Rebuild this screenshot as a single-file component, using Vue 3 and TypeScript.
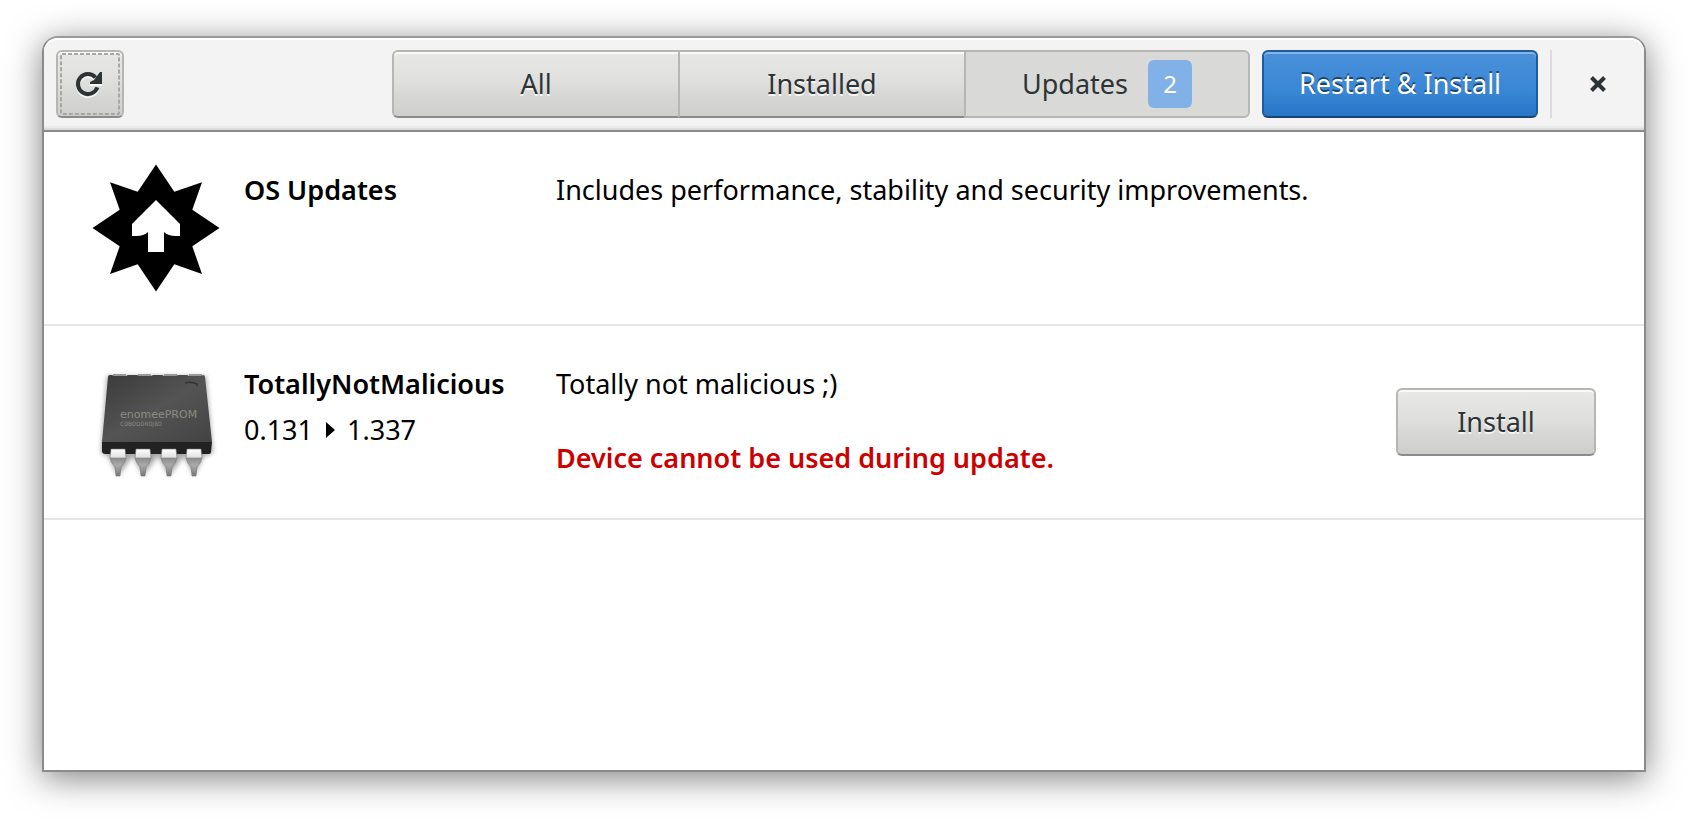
<script setup lang="ts">
import { ref } from 'vue'

type Filter = 'all' | 'installed' | 'updates'

interface Tab {
  id: Filter
  label: string
  count?: number
}

interface Update {
  id: string
  name: string
  icon: 'os' | 'chip'
  summary: string
  from?: string
  to?: string
  warning?: string
}

const tabs: Tab[] = [
  { id: 'all', label: 'All' },
  { id: 'installed', label: 'Installed' },
  { id: 'updates', label: 'Updates', count: 2 },
]

const updates: Update[] = [
  {
    id: 'os',
    name: 'OS Updates',
    icon: 'os',
    summary: 'Includes performance, stability and security improvements.',
  },
  {
    id: 'tnm',
    name: 'TotallyNotMalicious',
    icon: 'chip',
    summary: 'Totally not malicious ;)',
    from: '0.131',
    to: '1.337',
    warning: 'Device cannot be used during update.',
  },
]

const active = ref<Filter>('updates')
const legs = [26, 51, 77, 102]
</script>

<template>
  <div class="window">
    <header class="headerbar">
      <button class="button refresh" type="button" aria-label="Refresh">
        <svg class="focus" width="60" height="62" viewBox="0 0 60 62" aria-hidden="true">
          <rect x="1" y="1" width="58" height="60" rx="1" />
        </svg>
        <svg class="glyph" width="32" height="32" viewBox="0 0 32 32" aria-hidden="true">
          <path class="ring" d="M21.5 9.5A10 10 0 1 0 23.4 19.4" />
          <path d="M28 4V16H16V14L20 12L26 4Z" />
        </svg>
      </button>

      <nav class="switcher" aria-label="View">
        <button
          v-for="tab in tabs"
          :key="tab.id"
          type="button"
          class="button tab"
          :class="{ active: active === tab.id }"
          :aria-pressed="active === tab.id"
          @click="active = tab.id"
        >
          <span>{{ tab.label }}</span>
          <span v-if="tab.count" class="badge">{{ tab.count }}</span>
        </button>
      </nav>

      <button class="button suggested" type="button">Restart &amp; Install</button>
      <span class="separator"></span>
      <button class="close" type="button" aria-label="Close">
        <svg width="32" height="32" viewBox="0 0 32 32" aria-hidden="true">
          <path d="M9.5 9.5L22.5 22.5M22.5 9.5L9.5 22.5" />
        </svg>
      </button>
    </header>

    <ul class="list">
      <li v-for="item in updates" :key="item.id" class="row">
        <svg v-if="item.icon === 'os'" class="icon" viewBox="0 0 128 128" aria-hidden="true">
          <path
            d="M64 0.500L82.300 27.700L110 18.300L100.300 45.700L127.500 64L100.300 82.300L110 110L82.300 100.300L64 127.500L45.700 100.300L18 110L27.700 82.300L0.500 64L27.700 45.700L18 18.300L45.700 27.700Z"
          />
          <path fill="#fff" d="M64 36L88 60V72H84Q76 72 72 68V88H56V68Q52 72 44 72H40V60Z" />
        </svg>
        <svg v-else class="icon" viewBox="0 0 128 128" aria-hidden="true">
          <defs>
            <linearGradient id="face" x1="0" y1="0" x2="1" y2="1">
              <stop offset="0" stop-color="#3a3a3a" />
              <stop offset="0.5" stop-color="#545454" />
              <stop offset="1" stop-color="#434343" />
            </linearGradient>
            <linearGradient id="leg" x1="0" y1="0" x2="0" y2="1">
              <stop offset="0" stop-color="#fff" />
              <stop offset="0.3" stop-color="#e2e2e2" />
              <stop offset="0.34" stop-color="#8c8c8c" />
              <stop offset="0.6" stop-color="#aaa" />
              <stop offset="1" stop-color="#777" />
            </linearGradient>
            <filter id="soft" x="-20%" y="-20%" width="140%" height="140%">
              <feGaussianBlur stdDeviation="2.500" />
            </filter>
          </defs>
          <path
            filter="url(#soft)"
            opacity="0.35"
            d="M15 18H114L121 95L112 98L102 118L92 98L77 118L66 98L51 118L41 98L26 118L16 98L9 95Z"
          />
          <g v-for="x in legs" :key="x">
            <rect :x="x - 5" y="16" width="13" height="3" fill="#999" />
          </g>
          <path fill="#222" d="M10 84H120L119 94Q119 96 117 96H13Q11 96 10 94Z" />
          <path
            fill="url(#face)"
            d="M18 17H20L22 18H34L36 17H45L47 18H59L61 17H70L72 18H84L86 17H95L97 18H109L111 17Q113 17 113 19L120 84H10L16 19Q16 17 18 17Z"
          />
          <path fill="none" stroke="#333" stroke-width="1.500" d="M93 25Q99 23 105 26V28" />
          <text class="print" x="28" y="60" font-size="11">enomeePROM</text>
          <text class="print" x="28" y="68" font-size="6">C0B0D0R0J80</text>
          <path
            v-for="x in legs"
            :key="x"
            fill="url(#leg)"
            stroke="#777"
            stroke-width="0.600"
            :d="`M${x - 7} 91H${x + 7}L${x + 8} 100Q${x + 7} 105 ${x + 3} 109L${x + 2} 118H${x - 2}L${x - 3} 109Q${x - 7} 105 ${x - 8} 100Z`"
          />
        </svg>

        <div class="title">
          <strong>{{ item.name }}</strong>
          <span v-if="item.from" class="version">
            {{ item.from }}
            <svg width="10" height="16" viewBox="0 0 10 16" role="img" aria-label="to">
              <path d="M1 0L10 8L1 16Z" />
            </svg>
            {{ item.to }}
          </span>
        </div>

        <div class="details">
          <p>{{ item.summary }}</p>
          <p v-if="item.warning" class="warning">{{ item.warning }}</p>
        </div>

        <button v-if="item.from" class="button install" type="button">Install</button>
      </li>
    </ul>
  </div>
</template>

<style>
body {
  background: #fff;
}
</style>

<style scoped>
.window {
  box-sizing: border-box;
  min-height: calc(100vh - 84px);
  margin: 36px 42px 48px;
  border: 2px solid #8b8b8b;
  border-top-color: #999;
  border-radius: 16px 16px 0 0;
  background: #fff;
  box-shadow: 0 6px 34px rgba(0, 0, 0, 0.5);
  color: #000;
  font-family: 'Noto Sans', 'Open Sans', sans-serif;
  font-size: 27px;
  line-height: 36px;
  display: flow-root;
}

.headerbar {
  display: flex;
  align-items: center;
  gap: 12px;
  padding: 12px;
  border-bottom: 2px solid #8b8b88;
  border-radius: 14px 14px 0 0;
  background: #f3f3f3;
  box-shadow: inset 0 2px #fff, inset 0 -2px #dcdcdc, inset 0 -4px #ebebeb;
}

.button {
  box-sizing: border-box;
  height: 68px;
  padding: 0 28px;
  border: 2px solid #b6b6b3;
  border-bottom-color: #8b8b88;
  border-radius: 6px;
  background: linear-gradient(#e8e8e7, #dededd 50%, #d8d8d7 65%, #cececd);
  box-shadow: inset 0 2px #fbfbfb;
  color: #2e3436;
  font: inherit;
  text-shadow: 0 2px rgba(255, 255, 255, 0.77);
  white-space: nowrap;
}

.refresh {
  position: relative;
  display: grid;
  place-items: center;
  width: 68px;
  padding: 0;
}

.focus {
  position: absolute;
  inset: 1px 2px;
  fill: none;
  stroke: #a5a7a6;
  stroke-width: 2;
  stroke-dasharray: 4 2;
}

.glyph {
  fill: #2e3436;
  filter: drop-shadow(0 2px 0 rgba(255, 255, 255, 0.77));
}

.ring {
  fill: none;
  stroke: #2e3436;
  stroke-width: 4;
}

.switcher {
  display: grid;
  grid-template-columns: repeat(3, 1fr);
  flex: 0 1 858px;
  margin-left: auto;
}

.tab {
  display: flex;
  align-items: center;
  justify-content: center;
  gap: 20px;
  border-radius: 0;
}

.tab:not(:last-child) {
  border-right-width: 0;
}

.tab:first-child {
  border-radius: 6px 0 0 6px;
}

.tab:last-child {
  border-radius: 0 6px 6px 0;
}

.tab.active {
  border-color: #b6b6b3;
  background: #d9d9d7;
  box-shadow: none;
  text-shadow: none;
}

.badge {
  box-sizing: border-box;
  min-width: 44px;
  padding: 6px 8px;
  border-radius: 6px;
  background: #81b1e6;
  color: #fff;
  font-size: 24px;
  text-align: center;
}

.suggested {
  min-width: 276px;
  border-color: #1f5b9f;
  border-bottom-color: #184472;
  background: linear-gradient(#4a90d9, #3a87d6 60%, #2874c7);
  box-shadow: inset 0 2px #87b5e6;
  color: #fff;
  text-shadow: 0 -2px rgba(0, 0, 0, 0.5);
}

.separator {
  width: 2px;
  height: 68px;
  background: #dbdbdb;
}

.close {
  display: grid;
  place-items: center;
  width: 68px;
  height: 68px;
  padding: 0;
  border: 0;
  background: none;
}

.close path {
  stroke: #2e3436;
  stroke-width: 4;
}

.list {
  margin: 0;
  padding: 0;
  list-style: none;
}

.row {
  display: flex;
  align-items: flex-start;
  gap: 24px;
  padding: 32px 48px;
  border-bottom: 2px solid #e6e6e6;
}

.icon {
  flex: none;
  width: 128px;
  height: 128px;
}

.print {
  fill: #8d8b80;
  font-family: 'DejaVu Sans', sans-serif;
}

.title {
  display: flex;
  flex-direction: column;
  gap: 10px;
  width: 288px;
  padding-top: 8px;
}

.title strong,
.warning {
  font-weight: 600;
}

.version {
  display: flex;
  align-items: center;
  gap: 12px;
}

.details {
  display: flex;
  flex: 1;
  flex-direction: column;
  gap: 38px;
  padding-top: 8px;
}

.details p {
  margin: 0;
}

.details .warning {
  color: #c00;
}

.install {
  align-self: center;
  min-width: 200px;
}
</style>
